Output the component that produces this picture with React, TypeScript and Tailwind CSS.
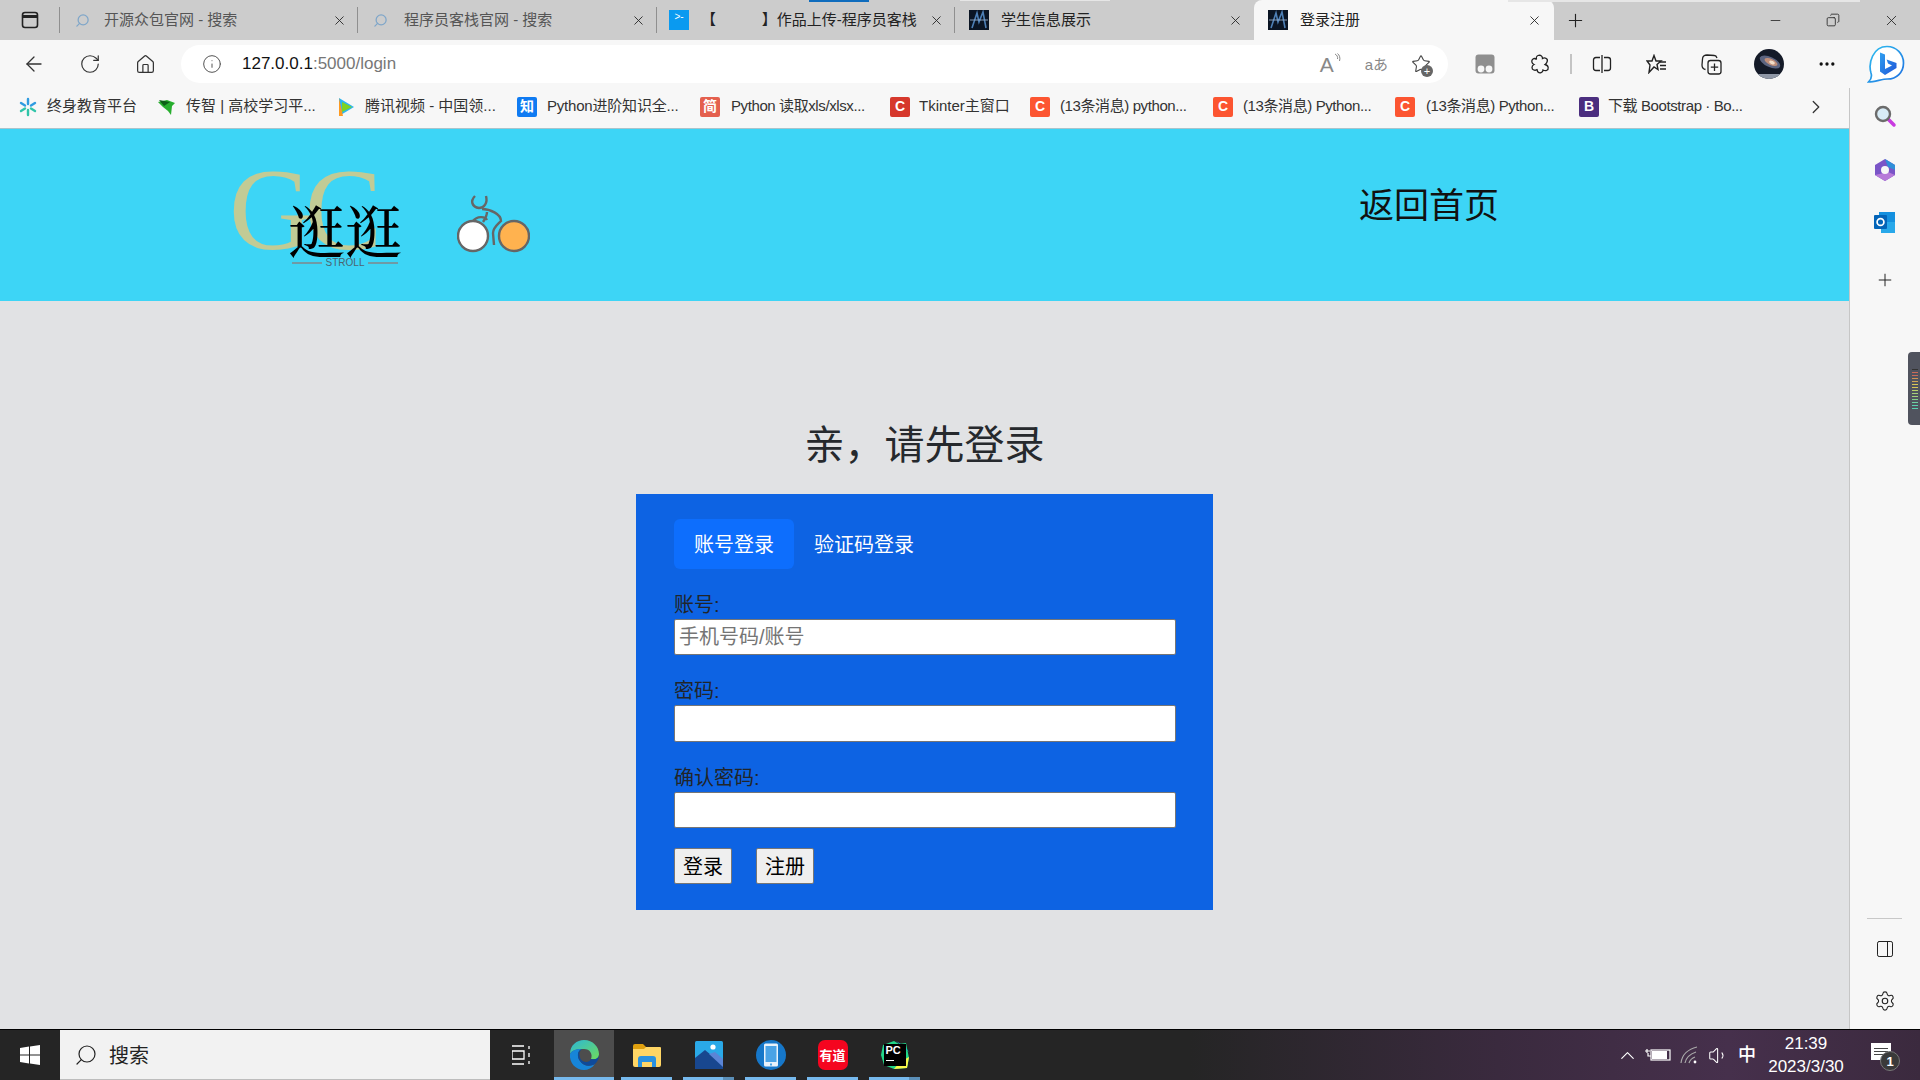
// Edge window showing the login page, with the Windows taskbar underneath.
import {
  ArrowLeft,
  ChevronRight,
  ChevronUp,
  Copy,
  Home,
  Info,
  Minus,
  MoreHorizontal,
  PanelRight,
  Plus,
  RotateCw,
  Search,
  Settings,
  Star,
  Volume1,
  X,
} from 'lucide-react';

const FONT = "font-['Liberation_Sans','Noto_Sans_CJK_SC',sans-serif]";

function NightFavicon() {
  return (
    <svg width="20" height="20" viewBox="0 0 20 20" className="shrink-0">
      <rect width="20" height="20" fill="#0b1524" />
      <path d="M3 18 L8 3 L10 12 L14 2 L17 18" fill="none" stroke="#4d7fb5" strokeWidth="1.6" />
      <path d="M1 10 H19" stroke="#9fb8d6" strokeWidth="0.8" />
    </svg>
  );
}

function SearchFavicon() {
  return <Search size={15} strokeWidth={2} className="shrink-0 scale-x-[-1] text-[#7fa6c9]" />;
}

function LetterIcon({ bg, letter, className }: { bg: string; letter: string; className?: string }) {
  return (
    <span className={`flex h-[20px] w-[20px] shrink-0 items-center justify-center rounded-[2px] text-[14px] font-bold text-white ${bg} ${className ?? ''}`}>
      {letter}
    </span>
  );
}

function Tabs() {
  return (
    <div className="relative flex h-[40px] shrink-0 items-center bg-[#cccccc] text-[15px] text-[#333333]">
      <div className="absolute left-[809px] top-0 h-[2px] w-[60px] bg-[#0f6cbd]" />
      <div className="absolute left-[960px] top-0 h-px w-[150px] bg-[#e6e6e6]" />
      <div className="absolute left-[1508px] top-0 h-[2px] w-[352px] bg-[#e6e6e6]" />
      <div className="flex h-full w-[59px] items-center justify-center">
        <svg width="20" height="20" viewBox="0 0 20 20" fill="none" stroke="#222" strokeWidth="1.6">
          <rect x="2.5" y="2.5" width="15" height="15" rx="2.5" />
          <path d="M2.5 6.5 H17.5" strokeWidth="3" />
        </svg>
      </div>
      <div className="flex h-[26px] w-[299px] items-center border-x border-[#8f8f8f] pl-[15px] pr-[10px]">
        <SearchFavicon />
        <span className="ml-[14px] flex-1 truncate text-[#555555]">开源众包官网 - 搜索</span>
        <X size={15} strokeWidth={1.4} className="text-[#222]" />
      </div>
      <div className="flex h-[26px] w-[299px] items-center border-r border-[#8f8f8f] pl-[15px] pr-[10px]">
        <SearchFavicon />
        <span className="ml-[16px] flex-1 truncate text-[#555555]">程序员客栈官网 - 搜索</span>
        <X size={15} strokeWidth={1.4} className="text-[#222]" />
      </div>
      <div className="flex h-[26px] w-[298px] items-center border-r border-[#8f8f8f] pl-[12px] pr-[10px]">
        <span className="flex h-[20px] w-[20px] shrink-0 items-start justify-center bg-[#0a9af0] text-[10px] leading-[14px] text-white">&gt;-</span>
        <span className="ml-[12px] flex-1 whitespace-pre text-[#222]">【           】作品上传-程序员客栈</span>
        <X size={15} strokeWidth={1.4} className="text-[#222]" />
      </div>
      <div className="flex h-[26px] w-[299px] items-center pl-[14px] pr-[11px]">
        <NightFavicon />
        <span className="ml-[12px] flex-1 text-[#222]">学生信息展示</span>
        <X size={15} strokeWidth={1.4} className="text-[#222]" />
      </div>
      <div className="flex h-full w-[300px] items-center rounded-t-[8px] bg-[#f7f7f7] pl-[14px] pr-[12px]">
        <NightFavicon />
        <span className="ml-[12px] flex-1 text-[#222]">登录注册</span>
        <X size={15} strokeWidth={1.4} className="text-[#222]" />
      </div>
      <Plus size={21} strokeWidth={1.3} className="ml-[11px] text-[#222]" />
      <div className="ml-auto flex items-center text-[#222]">
        <Minus size={15} strokeWidth={1.3} className="mr-[43px]" />
        <Copy size={14} strokeWidth={1.4} className="mr-[43px] scale-x-[-1]" />
        <X size={17} strokeWidth={1.2} className="mr-[20px]" />
      </div>
    </div>
  );
}

function BingIcon() {
  return (
    <svg width="38" height="38" viewBox="0 0 38 38">
      <defs>
        <linearGradient id="bingRim" x1="0" y1="0" x2="1" y2="1">
          <stop offset="0" stopColor="#2fc0f0" />
          <stop offset="1" stopColor="#1f6fe0" />
        </linearGradient>
        <linearGradient id="bingMark" x1="0" y1="0" x2="1" y2="1">
          <stop offset="0" stopColor="#2f9ff0" />
          <stop offset="1" stopColor="#1f55d8" />
        </linearGradient>
      </defs>
      <path d="M20 1.5 C29.5 1.5 36.5 9 36.5 18 C36.5 27.5 29.5 34 20.5 34 C15 34 8 37 1.5 37 C4.5 34 5 31 4 28 C1 18 6 1.5 20 1.5Z" fill="#fff" stroke="url(#bingRim)" strokeWidth="1.7" />
      <path d="M13 7.5 L18 9.5 V24 L25 20.5 L21 18.5 L19.6 14.5 L29.5 18 V23 L18 30 L13 26.5Z" fill="url(#bingMark)" />
    </svg>
  );
}

function Toolbar() {
  return (
    <div className="flex h-[48px] shrink-0 items-center bg-[#f7f7f7] text-[#333]">
      <ArrowLeft size={24} strokeWidth={1.3} className="ml-[22px]" />
      <RotateCw size={22} strokeWidth={1.3} className="ml-[33px]" />
      <Home size={21} strokeWidth={1.4} className="ml-[34px]" />
      <div className="ml-[25px] flex h-[38px] w-[1267px] items-center rounded-full bg-white pl-[21px] pr-[17px]">
        <Info size={20} strokeWidth={1.2} className="text-[#555]" />
        <span className="ml-[20px] text-[17px] text-[#111]">
          127.0.0.1<span className="text-[#777]">:5000/login</span>
        </span>
        <span className="ml-auto flex items-start text-[21px] font-light leading-none text-[#888]">
          A
          <svg width="7" height="9" viewBox="0 0 7 9" fill="none" stroke="#888" strokeWidth="1" className="mt-[-1px]">
            <path d="M1 1 C3 2 4 4 3.5 6 M3.5 0.5 C5.5 2 6.5 5 5.5 8" />
          </svg>
        </span>
        <span className="ml-[24px] text-[15px] leading-none text-[#888]">aあ</span>
        <span className="relative ml-[23px]">
          <Star size={20} strokeWidth={1.3} className="text-[#444]" />
          <span className="absolute bottom-[-3px] right-[-2px] flex h-[12px] w-[12px] items-center justify-center rounded-full bg-[#666] text-[11px] leading-none text-white">+</span>
        </span>
      </div>
      <svg width="20" height="20" viewBox="0 0 20 20" className="ml-[27px]">
        <rect x="0.5" y="0.5" width="19" height="19" rx="3" fill="#8f8f8f" />
        <circle cx="6" cy="15" r="3.4" fill="#f7f7f7" />
        <circle cx="14" cy="15" r="3.4" fill="#f7f7f7" />
      </svg>
      <svg width="20" height="20" viewBox="0 0 20 20" fill="none" stroke="#222" strokeWidth="1.3" className="ml-[35px]">
        <path d="M8 1.5 C11 0.5 12.5 2.5 12.5 4.5 C15 3 18.5 5 17 8 C16.5 9.5 15.5 10 15 10.5 C19 11.5 19 15.5 16.5 16.5 C15 17 14 16.5 13 16 C13 19 9.5 19.5 8 18 C7 17 7.5 16 7 15.5 C5 17 2 16 2 13.5 C2 12 3 11 4 10.5 C1.5 9.5 1 6.5 3 5 C4.5 4 6 5 6.5 5.5 C6 4 6.5 2 8 1.5Z" />
      </svg>
      <div className="ml-[20px] h-[20px] w-[2px] bg-[#c4c4c4]" />
      <svg width="20" height="20" viewBox="0 0 20 20" fill="none" stroke="#222" strokeWidth="1.3" className="ml-[20px]">
        <path d="M8 3.5 H4 Q1.5 3.5 1.5 6 V14 Q1.5 16.5 4 16.5 H8 M12 3.5 H16 Q18.5 3.5 18.5 6 V14 Q18.5 16.5 16 16.5 H12 M10 1 V19" />
      </svg>
      <svg width="21" height="20" viewBox="0 0 21 20" fill="none" stroke="#222" strokeWidth="1.4" className="ml-[34px]">
        <path d="M8 1.5 L10 7 H15 L11 10.5 L12 15.5 L8 13 L3 18.5 L4 11 L1 7 H6Z" />
        <path d="M14 8 H20 M14 11.5 H20 M14 15 H20" />
      </svg>
      <svg width="21" height="21" viewBox="0 0 21 21" fill="none" stroke="#222" strokeWidth="1.3" className="ml-[34px]">
        <rect x="7" y="6.5" width="13" height="13.5" rx="2.5" />
        <path d="M4.5 15.5 C2 15 1 13 1 11 L1.5 5 C1.5 2 4 1 6 1 L13.5 1.5 C15 1.5 15.5 2.5 16 4 M13.5 9.5 V17 M9.8 13.2 H17.2" />
      </svg>
      <svg width="30" height="30" viewBox="0 0 30 30" className="ml-[32px]">
        <defs>
          <clipPath id="avatarClip">
            <circle cx="15" cy="15" r="15" />
          </clipPath>
        </defs>
        <g clipPath="url(#avatarClip)">
          <rect width="30" height="30" fill="#141a28" />
          <rect y="25" width="30" height="5" fill="#8f97a6" />
          <ellipse cx="16" cy="13" rx="11" ry="5" fill="#5c6480" transform="rotate(25 16 13)" />
          <ellipse cx="17" cy="13" rx="7" ry="3" fill="#c08f7a" transform="rotate(25 17 13)" />
          <ellipse cx="18" cy="13.5" rx="3" ry="1.6" fill="#f2ddc8" transform="rotate(25 18 13.5)" />
        </g>
      </svg>
      <MoreHorizontal size={20} strokeWidth={2} className="ml-[33px] text-[#111]" />
      <span className="ml-[30px]">
        <BingIcon />
      </span>
    </div>
  );
}

function Bookmarks() {
  return (
    <div className="flex h-[41px] shrink-0 items-center border-b border-[#a9c4cc] bg-[#f7f7f7] pb-[3px] pl-[18px] text-[15px] text-[#333]">
      <svg width="20" height="20" viewBox="0 0 20 20" className="shrink-0">
        <g stroke="#2f9be0" strokeWidth="2.4" strokeLinecap="round">
          <path d="M10 2 V7" />
          <path d="M3 6 L7 8.5" />
          <path d="M17 6 L13 8.5" />
        </g>
        <g stroke="#2fc4a8" strokeWidth="2.4" strokeLinecap="round">
          <path d="M10 18 V13" />
          <path d="M3 14 L7 11.5" />
          <path d="M17 14 L13 11.5" />
        </g>
      </svg>
      <span className="ml-[9px] w-[90px] shrink-0 whitespace-nowrap">终身教育平台</span>
      <svg width="20" height="20" viewBox="0 0 20 20" className="ml-[20px] shrink-0">
        <path d="M1 5 L10 3 L18 6 L15 9 L14 18 L11 14 L6 10 Z" fill="#27ae2e" />
        <path d="M2 3 L13 5 L7 9Z" fill="#0d5f17" />
      </svg>
      <span className="ml-[9px] w-[130px] shrink-0 whitespace-nowrap">传智 | 高校学习平...</span>
      <svg width="20" height="22" viewBox="0 0 20 22" className="ml-[20px] shrink-0">
        <path d="M3 2 L18 11 L3 20Z" fill="#2db5f0" />
        <path d="M6 6 L16 11 L6 16Z" fill="#7ed321" />
        <path d="M3 2 L7 20 L3 20Z" fill="#ff9a1f" />
      </svg>
      <span className="ml-[9px] w-[133px] shrink-0 whitespace-nowrap">腾讯视频 - 中国领...</span>
      <span className="ml-[19px] shrink-0">
        <LetterIcon bg="bg-[#0f7bf2]" letter="知" className="text-[13px]" />
      </span>
      <span className="ml-[10px] w-[134px] shrink-0 whitespace-nowrap tracking-[-0.2px]">Python进阶知识全...</span>
      <span className="ml-[19px] shrink-0">
        <LetterIcon bg="bg-[#e4604e]" letter="简" className="text-[13px]" />
      </span>
      <span className="ml-[11px] w-[139px] shrink-0 whitespace-nowrap tracking-[-0.4px]">Python 读取xls/xlsx...</span>
      <span className="ml-[20px] shrink-0">
        <LetterIcon bg="bg-[#d6382c]" letter="C" />
      </span>
      <span className="ml-[9px] w-[90px] shrink-0 whitespace-nowrap">Tkinter主窗口</span>
      <span className="ml-[21px] shrink-0">
        <LetterIcon bg="bg-[#fc5531]" letter="C" />
      </span>
      <span className="ml-[10px] w-[133px] shrink-0 whitespace-nowrap tracking-[-0.4px]">(13条消息) python...</span>
      <span className="ml-[20px] shrink-0">
        <LetterIcon bg="bg-[#fc5531]" letter="C" />
      </span>
      <span className="ml-[10px] w-[132px] shrink-0 whitespace-nowrap tracking-[-0.4px]">(13条消息) Python...</span>
      <span className="ml-[20px] shrink-0">
        <LetterIcon bg="bg-[#fc5531]" letter="C" />
      </span>
      <span className="ml-[11px] w-[132px] shrink-0 whitespace-nowrap tracking-[-0.4px]">(13条消息) Python...</span>
      <span className="ml-[21px] shrink-0">
        <LetterIcon bg="bg-[#4b2e7f]" letter="B" />
      </span>
      <span className="ml-[9px] w-[139px] shrink-0 whitespace-nowrap tracking-[-0.4px]">下载 Bootstrap · Bo...</span>
      <ChevronRight size={22} strokeWidth={1.4} className="ml-[58px] shrink-0" />
    </div>
  );
}

function SiteHeader() {
  return (
    <header className="flex h-[172px] shrink-0 items-start justify-between bg-[#3dd5f6] pl-[232px] pr-[350px]">
      <div className="flex pt-[43px]">
        <div className="relative h-[83px] w-[225px]">
          <span className="absolute left-[-3px] top-[-20px] font-['Liberation_Serif',serif] text-[116px] leading-[116px] tracking-[-8px] text-[#c2cb95]">
            GC
          </span>
          <span className="absolute left-[56px] top-[26px] whitespace-nowrap font-['Noto_Serif_CJK_SC','Noto_Sans_CJK_SC',serif] text-[57px] font-medium leading-[60px] text-black">
            逛逛
          </span>
          <div className="absolute left-[60px] top-[86px] flex w-[106px] items-center gap-[4px] text-[10px] leading-[10px] text-[#4b6470]">
            <span className="h-[2px] flex-1 bg-[#6f9aa6]" />
            STROLL
            <span className="h-[2px] flex-1 bg-[#6f9aa6]" />
          </div>
        </div>
        <svg width="73" height="58" viewBox="0 0 73 58" className="mt-[23px]" fill="none" stroke="#666" strokeWidth="2.4">
          <path d="M16 26 C20 21 28 21 30 25" />
          <path d="M18 1 C13 6 15 12 22 13 C27 13 31 8 29 1" />
          <path d="M25 14 C33 14 44 19 44 26 C40 30 36 33 36 38 L37 50" />
          <path d="M30 17 C30 20 28 24 26 27" />
          <circle cx="16" cy="41" r="15" fill="#fff" />
          <circle cx="57" cy="41" r="15" fill="#ffb24f" />
        </svg>
      </div>
      <a className="mt-[56px] text-[35px] leading-[42px] text-[#111]">返回首页</a>
    </header>
  );
}

function Field({ label, placeholder, height }: { label: string; placeholder?: string; height: string }) {
  return (
    <div className="mb-[22px]">
      <label className="block h-[28px] text-[20px] leading-[28px] text-[#212529]">{label}</label>
      <input
        placeholder={placeholder}
        className={`block w-full rounded-[2px] border border-[#767676] bg-white px-[4px] text-[20px] placeholder:text-[#757575] ${height}`}
      />
    </div>
  );
}

function LoginCard() {
  return (
    <main className="flex flex-1 flex-col items-center bg-[#e1e2e4]">
      <h1 className="mb-[25px] mt-[120px] text-[40px] leading-[48px] text-[#26292d]">亲，请先登录</h1>
      <div className="h-[416px] w-[577px] bg-[#0d63e3] pl-[38px] pr-[37px] pt-[25px]">
        <div className="flex text-[20px] leading-[30px] text-white">
          <span className="rounded-[6px] bg-[#0d6efd] px-[20px] pb-[9px] pt-[11px]">账号登录</span>
          <span className="px-[20px] pb-[9px] pt-[11px]">验证码登录</span>
        </div>
        <form className="mt-[22px]">
          <Field label="账号:" placeholder="手机号码/账号" height="h-[36px]" />
          <Field label="密码:" height="h-[37px]" />
          <Field label="确认密码:" height="h-[36px]" />
          <div className="mt-[-2px] flex gap-[24px]">
            <button type="button" className="h-[36px] w-[58px] rounded-[2px] border border-[#767676] bg-[#efefef] pt-[1px] text-[20px] text-black">登录</button>
            <button type="button" className="h-[36px] w-[58px] rounded-[2px] border border-[#767676] bg-[#efefef] pt-[1px] text-[20px] text-black">注册</button>
          </div>
        </form>
      </div>
    </main>
  );
}

function Sidebar() {
  return (
    <aside className="relative flex w-[71px] shrink-0 flex-col items-center border-l border-[#c6c6c6] bg-[#f7f7f7] pr-[1px]">
      <svg width="24" height="24" viewBox="0 0 24 24" className="mt-[16px]" fill="none">
        <path d="M15 15 L21 21" stroke="#c93be0" strokeWidth="3.5" strokeLinecap="round" />
        <circle cx="10" cy="10" r="7" fill="#d8ecf7" stroke="#6b6b6b" strokeWidth="2.4" />
      </svg>
      <svg width="22" height="24" viewBox="0 0 22 24" className="mt-[30px]">
        <path d="M11 1 L21 7 V17 L11 23 L1 17 V7Z" fill="#7a55c7" />
        <path d="M11 1 L21 7 V12 L14 9Z" fill="#2f8fd8" />
        <path d="M1 17 L11 23 L21 17 L14 14Z" fill="#b77ad9" />
        <circle cx="11" cy="12" r="4" fill="#f7f7f7" />
      </svg>
      <svg width="22" height="22" viewBox="0 0 22 22" className="mt-[30px]">
        <rect x="5" y="0" width="16" height="10" fill="#1490df" />
        <path d="M7 10 H21 V21 H7Z" fill="#28a8ea" />
        <rect x="0" y="3" width="13" height="14" rx="1" fill="#0364b8" />
        <circle cx="6.5" cy="10" r="3.4" fill="none" stroke="#fff" strokeWidth="1.7" />
      </svg>
      <Plus size={20} strokeWidth={1.2} className="mt-[36px] text-[#222]" />
      <div className="absolute left-[58px] top-[264px] flex h-[73px] w-[13px] flex-col items-center justify-center gap-[2px] rounded-l-[4px] bg-[#50535e]">
        <span className="h-[1px] w-[6px] bg-[#333]" />
        <span className="h-[1px] w-[6px] bg-[#c96a5a]" />
        <span className="h-[1px] w-[6px] bg-[#c96a5a]" />
        <span className="h-[1px] w-[6px] bg-[#d09456]" />
        <span className="h-[1px] w-[6px] bg-[#d0a656]" />
        <span className="h-[1px] w-[6px] bg-[#d6c656]" />
        <span className="h-[1px] w-[6px] bg-[#d6c656]" />
        <span className="h-[1px] w-[6px] bg-[#bcd06a]" />
        <span className="h-[1px] w-[6px] bg-[#a6d07a]" />
        <span className="h-[1px] w-[6px] bg-[#a6d07a]" />
        <span className="h-[1px] w-[6px] bg-[#86d08c]" />
        <span className="h-[1px] w-[6px] bg-[#6ed0a0]" />
        <span className="h-[1px] w-[6px] bg-[#5ad0b0]" />
        <span className="h-[1px] w-[6px] bg-[#5ad0b0]" />
      </div>
      <div className="mt-auto h-px w-[35px] bg-[#c8c8c8]" />
      <PanelRight size={20} strokeWidth={1.2} className="mt-[20px] text-[#222]" />
      <Settings size={22} strokeWidth={1.2} className="mb-[17px] mt-[31px] text-[#222]" />
    </aside>
  );
}

function TaskbarApp({ width, active, stacked, children }: { width: string; active?: boolean; stacked?: boolean; children: React.ReactNode }) {
  return (
    <div className={`relative flex h-full items-center justify-center ${width} ${active ? 'bg-[#4d4d4d]' : ''}`}>
      {children}
      <span className="absolute bottom-0 left-0 right-0 h-[3px] bg-[#76b9ed]" />
      {stacked && <span className="absolute bottom-0 right-0 h-[3px] w-[11px] bg-[#5b8fb8]" />}
    </div>
  );
}

function Taskbar() {
  return (
    <footer className="flex h-[51px] shrink-0 items-stretch border-t border-black bg-[linear-gradient(90deg,#252525_0%,#252525_62%,#3a2a3e_78%,#46304c_90%,#3b2a3e_100%)] text-white">
      <div className="flex w-[60px] items-center justify-center">
        <svg width="20" height="20" viewBox="0 0 20 20" fill="#fff">
          <path d="M0 3 L9 1.6 V9.4 H0Z M10 1.4 L20 0 V9.4 H10Z M0 10.5 H9 V18.4 L0 17Z M10 10.5 H20 V20 L10 18.6Z" />
        </svg>
      </div>
      <div className="flex w-[430px] items-center border-b border-[#bdbdbd] bg-[#f2f2f2] pl-[14px] text-[#222]">
        <Search size={24} strokeWidth={1.2} className="scale-x-[-1]" />
        <span className="ml-[11px] pt-[2px] text-[20px]">搜索</span>
      </div>
      <div className="flex w-[64px] items-center justify-center">
        <svg width="20" height="20" viewBox="0 0 20 20" fill="none" stroke="#fff" strokeWidth="1.3">
          <path d="M0 1 H12 M0 19 H12 M0 6 H12 V14 H0Z M17 1 V4 M17 8 V12 M17 16 V19" />
        </svg>
      </div>
      <div className="flex gap-[11px]">
        <TaskbarApp width="mr-[-4px] w-[60px]" active>
          <svg width="30" height="30" viewBox="0 0 30 30">
            <defs>
              <linearGradient id="edgeTop" x1="0" y1="0" x2="1" y2="1">
                <stop offset="0" stopColor="#2bb7d8" />
                <stop offset="1" stopColor="#6fdc5a" />
              </linearGradient>
            </defs>
            <path d="M1 14 C1 5 8 0 15 0 C24 0 30 7 30 14 C30 19 26 20 22 19 C24 14 21 9 15 9 C8 9 3 10 1 14Z" fill="url(#edgeTop)" />
            <path d="M1 14 C3 10 8 8.5 13 9 C8 10.5 8 17 11 21 C14 26 21 27 26 24 C23 28 19 30 15 30 C7 30 0 23 1 14Z" fill="#1785d8" />
            <path d="M13 9 C9 12 10 18 13 20.5 C16 23 21 22 22 19 C26 20 29 19 30 15 C30 19 28 22 26 24 C21 27 14 26 11 21 C8 17 8 10.5 13 9Z" fill="#0e4a9a" />
          </svg>
        </TaskbarApp>
        <TaskbarApp width="w-[51px]">
          <svg width="28" height="23" viewBox="0 0 28 23">
            <path d="M0 2 Q0 0 2 0 H10 L13 3 H13 V8 H0Z" fill="#e0a00e" />
            <path d="M0 5 H11 L13 3 H27 Q28 3 28 4 V21 Q28 23 26 23 H2 Q0 23 0 21Z" fill="#ffd665" />
            <path d="M5 23 V15 Q5 12 8 12 H20 Q23 12 23 15 V23 H19 V18 H9 V23Z" fill="#2a92e0" />
          </svg>
        </TaskbarApp>
        <TaskbarApp width="w-[51px]" stacked>
          <svg width="28" height="28" viewBox="0 0 28 28">
            <rect width="28" height="28" rx="1.5" fill="#2aa9e8" />
            <path d="M0 28 V17 L10 9 L28 24 V28Z" fill="#18478f" />
            <path d="M14 13 L20 11 L28 18 V26 Z" fill="#5b85d6" />
            <circle cx="18" cy="6" r="2.6" fill="#fff" />
          </svg>
        </TaskbarApp>
        <TaskbarApp width="w-[51px]">
          <svg width="30" height="30" viewBox="0 0 30 30">
            <circle cx="15" cy="15" r="15" fill="#1677c9" />
            <rect x="8" y="3.5" width="14" height="23" rx="1.5" fill="#e8f2fb" />
            <rect x="9.5" y="6" width="11" height="16" fill="#4aa3e6" />
            <rect x="14" y="23.5" width="2" height="2" fill="#4aa3e6" />
          </svg>
        </TaskbarApp>
        <TaskbarApp width="w-[51px]">
          <span className="flex h-[30px] w-[30px] items-center justify-center rounded-[7px] bg-[#f5051f] text-[13px] font-bold leading-none text-white">有道</span>
        </TaskbarApp>
        <TaskbarApp width="w-[51px]" stacked>
          <span className="relative flex h-[30px] w-[30px] items-center justify-center">
            <svg width="30" height="30" viewBox="0 0 30 30" className="absolute inset-0">
              <path d="M3 5 L14 1 L19 4 L26 3 L29 18 L27 28 L14 29 L4 25 L1 15Z" fill="#21d789" />
              <path d="M16 1 L29 12 L24 6Z" fill="#07c3f2" />
              <path d="M14 29 L27 28 L29 17 L20 22Z" fill="#fcf84a" />
            </svg>
            <span className="relative flex h-[22px] w-[22px] flex-col bg-black pl-[2px] text-[11px] font-bold leading-[13px] text-white">
              PC
              <span className="mt-[3px] h-[1px] w-[8px] bg-white" />
            </span>
          </span>
        </TaskbarApp>
      </div>
      <div className="ml-auto flex items-center">
        <ChevronUp size={23} strokeWidth={1.2} />
        <svg width="26" height="14" viewBox="0 0 26 14" className="ml-[6px]" fill="none" stroke="#fff" strokeWidth="1.2">
          <path d="M0 3 H5 M2 1 V5 M3 5 V8 H6" />
          <rect x="6" y="2" width="19" height="10" />
          <rect x="7" y="3" width="15" height="8" fill="#fff" stroke="none" />
        </svg>
        <svg width="18" height="18" viewBox="0 0 18 18" className="ml-[9px]" fill="none" stroke="#aaa" strokeWidth="1.2">
          <path d="M1 17 C2 9 8 3 17 1 M5 17 C6 12 10 8 16 6 M9 17 C10 14 12 12 15 11" />
          <circle cx="15" cy="16" r="1.4" fill="#fff" stroke="none" />
        </svg>
        <Volume1 size={21} strokeWidth={1.2} className="ml-[10px]" />
        <span className="ml-[9px] text-[18px] font-medium">中</span>
        <div className="ml-[8px] flex w-[84px] flex-col items-center whitespace-nowrap text-[17px] leading-[23px]">
          <span>21:39</span>
          <span>2023/3/30</span>
        </div>
        <div className="relative ml-[23px] mr-[25px] h-[26px] w-[24px]">
          <div className="mt-[1px] flex h-[17px] w-[20px] flex-col justify-center gap-[2px] bg-white px-[3px]">
            <span className="h-px bg-[#444]" />
            <span className="h-px bg-[#444]" />
            <span className="h-px bg-[#444]" />
          </div>
          <span className="absolute bottom-[-3px] right-[-5px] flex h-[20px] w-[20px] items-center justify-center rounded-full border border-[#777] bg-[#3a3a3a] text-[13px] font-bold leading-none">1</span>
        </div>
      </div>
    </footer>
  );
}

export default function App() {
  return (
    <div className={`flex h-[1080px] w-[1920px] flex-col overflow-hidden ${FONT}`}>
      <Tabs />
      <Toolbar />
      <div className="flex min-h-0 flex-1">
        <div className="flex min-w-0 flex-1 flex-col">
          <Bookmarks />
          <SiteHeader />
          <LoginCard />
        </div>
        <Sidebar />
      </div>
      <Taskbar />
    </div>
  );
}
